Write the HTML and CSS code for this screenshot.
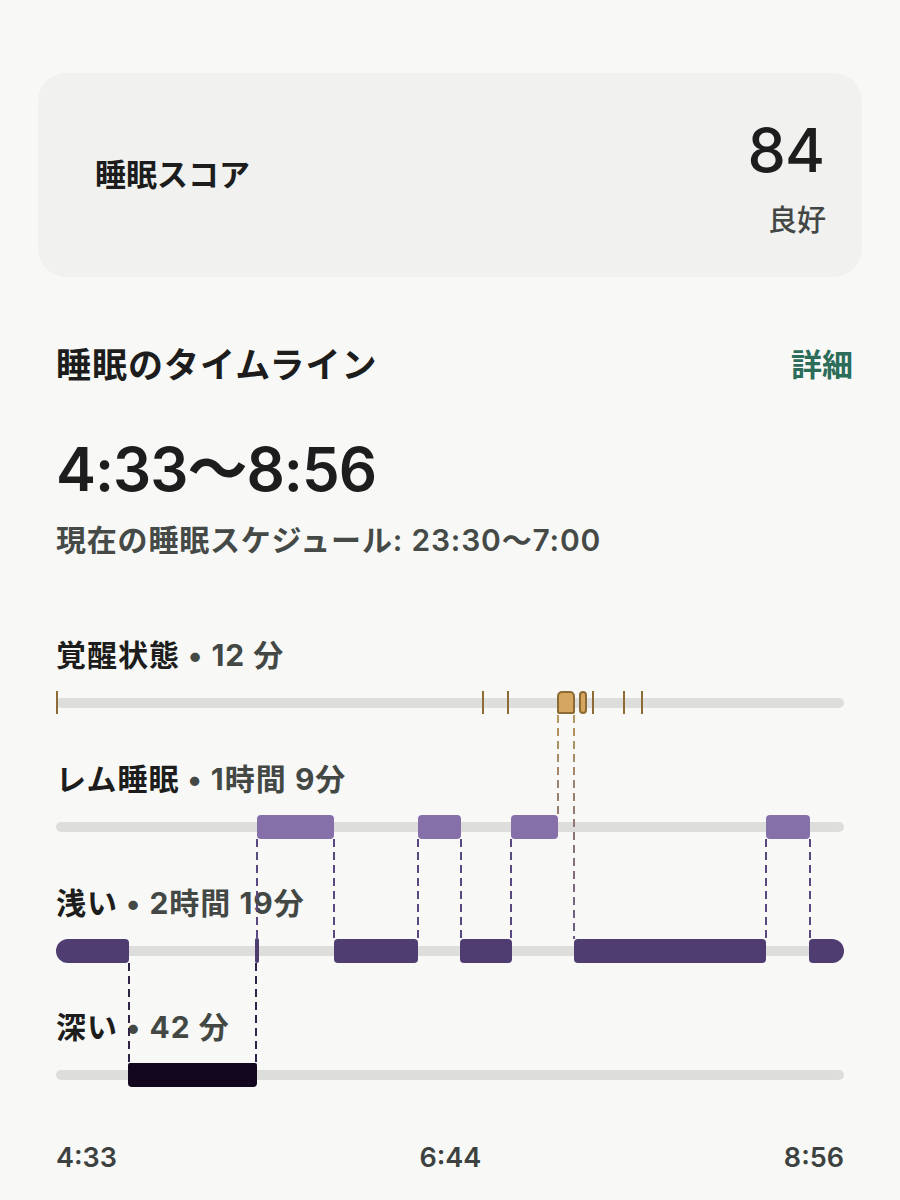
FILE: index.html
```html
<!DOCTYPE html>
<html lang="ja">
<head>
  <meta charset="UTF-8">
  <meta name="viewport" content="width=device-width, initial-scale=1.0">
  <title>睡眠</title>
  <link rel="stylesheet" href="styles.css">
</head>
<body>

  <div class="page">

    <!-- Sleep score card -->
    <section class="score-card">
      <div class="score-label">睡眠スコア</div>
      <div class="score-value">
        <div class="score-number">84</div>
        <div class="score-grade">良好</div>
      </div>
    </section>

    <!-- Timeline -->
    <section class="timeline">
      <div class="timeline-header">
        <h2 class="timeline-title">睡眠のタイムライン</h2>
        <a class="details-link" href="#">詳細</a>
      </div>

      <div class="sleep-range">4:33〜8:56</div>
      <div class="schedule">現在の睡眠スケジュール: 23:30〜7:00</div>

      <div class="chart">
        <!-- dashed stage transitions -->
        <svg class="connectors" width="788" height="450" viewBox="0 0 788 450">
          <defs>
            <linearGradient id="wakeFade" gradientUnits="userSpaceOnUse" x1="0" y1="78" x2="0" y2="302">
              <stop offset="0" stop-color="#b8965e"/>
              <stop offset="1" stop-color="#6a5888"/>
            </linearGradient>
          </defs>
          <g stroke-width="2" stroke-dasharray="8 5" fill="none">
            <line x1="502" y1="78" x2="502" y2="178" stroke="url(#wakeFade)"/>
            <line x1="518" y1="78" x2="518" y2="302" stroke="url(#wakeFade)"/>
            <g stroke="#5a4880">
              <line x1="201" y1="202" x2="201" y2="302"/>
              <line x1="278" y1="202" x2="278" y2="302"/>
              <line x1="362" y1="202" x2="362" y2="302"/>
              <line x1="405" y1="202" x2="405" y2="302"/>
              <line x1="455" y1="202" x2="455" y2="302"/>
              <line x1="710" y1="202" x2="710" y2="302"/>
              <line x1="754" y1="202" x2="754" y2="302"/>
            </g>
            <g stroke="#2f2447">
              <line x1="73" y1="326" x2="73" y2="426"/>
              <line x1="200" y1="326" x2="200" y2="426"/>
            </g>
          </g>
        </svg>

        <div class="stage">
          <div class="stage-label"><span class="stage-name">覚醒状態</span><span class="stage-time"> • 12 分</span></div>
          <div class="track">
            <span class="tick" style="left:0px"></span>
            <span class="tick" style="left:426px"></span>
            <span class="tick" style="left:451px"></span>
            <span class="tick" style="left:536px"></span>
            <span class="tick" style="left:567px"></span>
            <span class="tick" style="left:585px"></span>
            <span class="awake-block" style="left:501px;width:18px"></span>
            <span class="awake-block small" style="left:523px;width:8px"></span>
          </div>
        </div>

        <div class="stage">
          <div class="stage-label"><span class="stage-name">レム睡眠</span><span class="stage-time"> • 1時間 9分</span></div>
          <div class="track">
            <span class="bar rem" style="left:201px;width:77px"></span>
            <span class="bar rem" style="left:362px;width:43px"></span>
            <span class="bar rem" style="left:455px;width:47px"></span>
            <span class="bar rem" style="left:710px;width:44px"></span>
          </div>
        </div>

        <div class="stage">
          <div class="stage-label"><span class="stage-name">浅い</span><span class="stage-time"> • 2時間 19分</span></div>
          <div class="track">
            <span class="bar light first" style="left:0px;width:73px"></span>
            <span class="bar light thin" style="left:199px;width:4px"></span>
            <span class="bar light" style="left:278px;width:84px"></span>
            <span class="bar light" style="left:404px;width:52px"></span>
            <span class="bar light" style="left:518px;width:192px"></span>
            <span class="bar light last" style="left:753px;width:35px"></span>
          </div>
        </div>

        <div class="stage">
          <div class="stage-label"><span class="stage-name">深い</span><span class="stage-time"> • 42 分</span></div>
          <div class="track">
            <span class="bar deep" style="left:72px;width:129px"></span>
          </div>
        </div>
      </div>

      <div class="axis">
        <span>4:33</span>
        <span>6:44</span>
        <span>8:56</span>
      </div>
    </section>

  </div>

</body>
</html>
```

FILE: styles.css
```css
/* Reset */
* {
  margin: 0;
  padding: 0;
  box-sizing: border-box;
}

body {
  font-family: "Inter", "Noto Sans CJK JP", sans-serif;
  background-color: #f8f9f7;
  color: #1c1d1c;
}

.page {
  padding: 73px 38px 0;
}

/* Score card */
.score-card {
  height: 204px;
  display: flex;
  align-items: center;
  justify-content: space-between;
  padding: 0 38px 0 57px;
  background: #f1f2f0;
  border-radius: 28px;
}

.score-label {
  font-size: 31px;
  font-weight: 600;
  line-height: 40px;
}

.score-value {
  display: flex;
  flex-direction: column;
  align-items: flex-end;
  margin-top: 8px;
}

.score-number {
  font-size: 61px;
  font-weight: 500;
  line-height: 62px;
  letter-spacing: -1px;
}

.score-grade {
  margin-top: 22px;
  font-size: 29px;
  font-weight: 500;
  line-height: 36px;
  color: #444745;
  margin-right: -2px;
}

/* Timeline */
.timeline {
  padding: 66px 18px 0;
}

.timeline-header {
  display: flex;
  align-items: center;
  justify-content: space-between;
  margin-right: -9px;
}

.timeline-title {
  font-size: 35px;
  font-weight: 600;
  line-height: 44px;
  letter-spacing: 1px;
}

.details-link {
  font-size: 31px;
  font-weight: 600;
  line-height: 44px;
  color: #2c6d5a;
  text-decoration: none;
}

.sleep-range {
  margin-top: 51px;
  font-size: 60px;
  font-weight: 600;
  line-height: 62px;
  letter-spacing: -1px;
}

.schedule {
  margin-top: 20px;
  font-size: 30px;
  font-weight: 600;
  line-height: 40px;
  letter-spacing: 0.8px;
  color: #454a47;
}

/* Chart */
.chart {
  position: relative;
  margin-top: 77px;
  display: flex;
  flex-direction: column;
  gap: 46px;
}

.connectors {
  position: absolute;
  left: 0;
  top: 0;
  z-index: 1;
  overflow: visible;
}

.stage-label {
  height: 36px;
  font-size: 30px;
  font-weight: 700;
  line-height: 36px;
  letter-spacing: 1px;
  white-space: nowrap;
}

.stage-time {
  color: #434845;
}

.track {
  position: relative;
  height: 24px;
  margin-top: 18px;
}

.track::before {
  content: "";
  position: absolute;
  left: 0;
  right: 0;
  top: 7px;
  height: 10px;
  background: #dddedc;
  border-radius: 5px;
}

.tick {
  position: absolute;
  top: 0;
  width: 2px;
  height: 23px;
  background: #8d6b35;
  z-index: 2;
}

.awake-block {
  position: absolute;
  top: 0;
  height: 23px;
  background: #d5a660;
  border: 2px solid #8d6b35;
  border-radius: 5px 5px 2px 2px;
  z-index: 2;
}

.awake-block.small {
  border-radius: 4px;
}

.bar {
  position: absolute;
  top: 0;
  height: 24px;
  border-radius: 4px;
  z-index: 2;
}

.bar.rem {
  background: #8670aa;
}

.bar.light {
  background: #4f3d72;
}

.bar.light.first {
  border-radius: 12px 4px 4px 12px;
}

.bar.light.last {
  border-radius: 4px 12px 12px 4px;
}

.bar.light.thin {
  top: -1px;
  height: 25px;
  border-radius: 2px;
}

.bar.deep {
  background: #13071f;
  border-radius: 2px 2px 4px 4px;
}

/* Axis labels */
.axis {
  display: flex;
  justify-content: space-between;
  margin-top: 54px;
  font-size: 27px;
  font-weight: 600;
  line-height: 34px;
  color: #3d4240;
}
```
